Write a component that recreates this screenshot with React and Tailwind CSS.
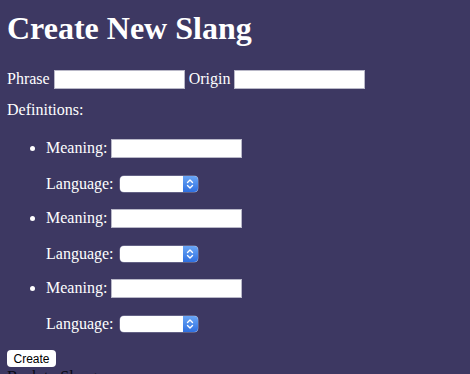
import React from "react";

function Select() {
  return (
    <div className="flex h-[16px] w-[78px] overflow-hidden rounded-[4px] bg-white shadow-[0_0_0_0.5px_#8a8aa8]">
      <div className="flex-1" />
      <div className="flex w-[15px] items-center justify-center bg-gradient-to-b from-[#6aa6f5] to-[#2f6fe0]">
        <svg width="8" height="12" viewBox="0 0 8 12" fill="none" stroke="white" strokeWidth="1.4" strokeLinecap="round" strokeLinejoin="round">
          <path d="M1.5 4.5 L4 2 L6.5 4.5" />
          <path d="M1.5 7.5 L4 10 L6.5 7.5" />
        </svg>
      </div>
    </div>
  );
}

function TextInput() {
  return <div className="h-[19px] w-[131px] border border-[#b9b8c8] bg-white" />;
}

function Item() {
  return (
    <li className="flex flex-col">
      <div className="flex h-[20px] items-center">
        <span className="mr-[11px] ml-[23px] h-[5px] w-[5px] rounded-full bg-white" />
        <span>Meaning:</span>
        <div className="ml-[4px]">
          <TextInput />
        </div>
      </div>
      <div className="mt-[16px] flex h-[20px] items-center pl-[39px]">
        <span>Language:</span>
        <div className="ml-[6px]">
          <Select />
        </div>
      </div>
    </li>
  );
}

export default function App() {
  return (
    <div
      className="h-[374px] w-[470px] overflow-hidden bg-[#3d3862] pl-[7px] pt-[10px] text-[16px] text-white"
      style={{ fontFamily: '"Liberation Serif", "Times New Roman", serif' }}
    >
      <h1 className="h-[37px] text-[32px] font-bold leading-[37px]">Create New Slang</h1>
      <div className="mt-[22px] flex h-[20px] items-center">
        <span>Phrase</span>
        <div className="ml-[4px]">
          <TextInput />
        </div>
        <span className="ml-[4px]">Origin</span>
        <div className="ml-[4px]">
          <TextInput />
        </div>
      </div>
      <div className="mt-[11px] flex h-[20px] items-center">Definitions:</div>
      <ul className="mt-[18px] flex flex-col gap-[14px]">
        <Item />
        <Item />
        <Item />
      </ul>
      <div className="mt-[16px] flex h-[17px] items-center">
        <button
          className="flex h-[17px] w-[49px] items-center justify-center rounded-[4px] bg-white text-[12px] text-black"
          style={{ fontFamily: '"Liberation Sans", Arial, sans-serif' }}
        >
          Create
        </button>
      </div>
      <div className="mt-[1px] leading-[18px] text-[#0a0a14]">Back to Slangs</div>
    </div>
  );
}
